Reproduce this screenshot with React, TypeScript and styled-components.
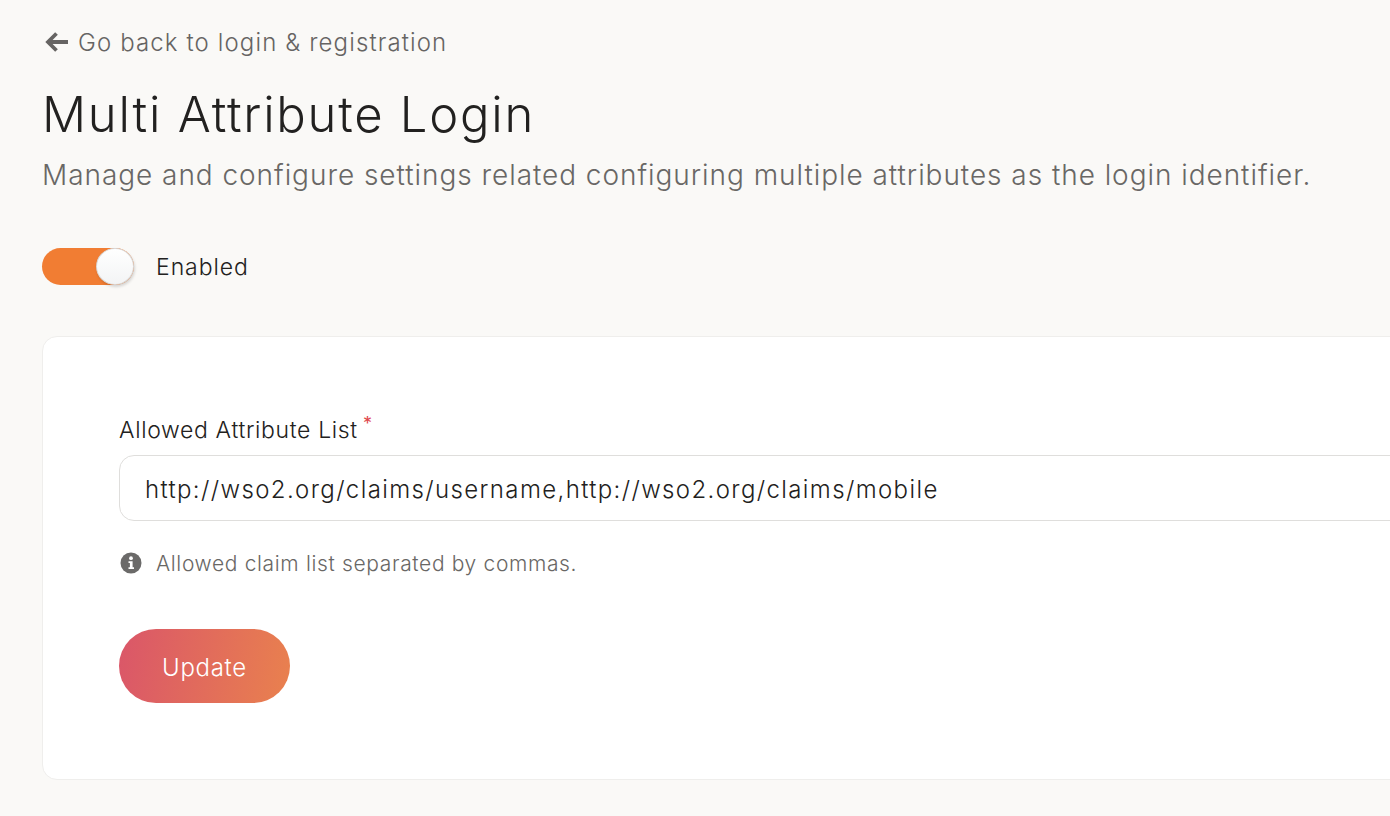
import React from "react";
import styled, { createGlobalStyle } from "styled-components";

const Global = createGlobalStyle`
  html, body { margin: 0; padding: 0; background: #faf9f7; overflow: hidden; }
  body { font-family: "Inter", "Liberation Sans", sans-serif; font-weight: 300; }
`;

const Page = styled.div`
  width: 1390px;
  height: 816px;
  overflow: hidden;
  box-sizing: border-box;
  padding: 26px 0 0 42px;
  display: flex;
  flex-direction: column;
`;

const BackLink = styled.a`
  display: flex;
  align-items: center;
  gap: 10px;
  height: 32px;
  margin-left: 3px;
  color: #666463;
  font-size: 24px;
  letter-spacing: 1.12px;
  white-space: nowrap;
`;

const Title = styled.h1`
  margin: 20px 0 0;
  font-size: 49px;
  line-height: 74px;
  font-weight: 300;
  color: #222120;
  letter-spacing: 1.75px;
  white-space: nowrap;
`;

const Subtitle = styled.p`
  margin: 0;
  font-size: 28px;
  line-height: 46px;
  color: #696765;
  letter-spacing: 0.95px;
  white-space: nowrap;
`;

const ToggleRow = styled.div`
  display: flex;
  align-items: center;
  gap: 22px;
  margin-top: 50px;
`;

const Track = styled.div`
  position: relative;
  width: 92px;
  height: 37px;
  border-radius: 19px;
  background: #f17d33;
`;

const Knob = styled.div`
  position: absolute;
  top: 0;
  right: 0;
  width: 38px;
  height: 37px;
  box-sizing: border-box;
  border-radius: 50%;
  border: 1px solid #d8d8d8;
  background: linear-gradient(#ffffff, #f3f4f5);
  box-shadow: 1px 2px 3px rgba(0, 0, 0, 0.15);
`;

const ToggleLabel = styled.span`
  font-size: 23px;
  color: #222120;
  letter-spacing: 0.95px;
`;

const Card = styled.section`
  box-sizing: border-box;
  width: 1400px;
  height: 444px;
  margin-top: 51px;
  padding: 76px 0 0 76px;
  background: #ffffff;
  border: 1px solid #efeeec;
  border-radius: 15px;
  flex-shrink: 0;
`;

const FieldLabel = styled.label`
  display: block;
  height: 42px;
  line-height: 34px;
  font-size: 23px;
  color: #222120;
  letter-spacing: 0.65px;
`;

const Required = styled.sup`
  color: #e0484c;
  font-size: 18px;
  font-weight: 400;
  line-height: 0;
  margin-left: 5px;
  vertical-align: 8px;
`;

const Input = styled.div`
  box-sizing: border-box;
  width: 1300px;
  height: 66px;
  display: flex;
  align-items: center;
  padding: 2px 0 0 25px;
  border: 1px solid #dfdedc;
  border-radius: 15px;
  font-size: 24px;
  color: #222120;
  letter-spacing: 1.38px;
  white-space: nowrap;
`;

const Hint = styled.div`
  display: flex;
  align-items: center;
  gap: 14px;
  margin-top: 26px;
  margin-left: 1px;
  height: 32px;
  font-size: 21px;
  color: #696765;
  letter-spacing: 0.65px;
`;

const UpdateButton = styled.button`
  display: block;
  margin-top: 50px;
  padding: 2px 0 0;
  width: 171px;
  height: 74px;
  border: none;
  border-radius: 37px;
  background: linear-gradient(100deg, #da5669, #e9814e);
  color: #ffffff;
  font-family: inherit;
  font-weight: 300;
  font-size: 24px;
  letter-spacing: 0.7px;
`;

export default function App() {
  return (
    <>
      <Global />
      <Page>
        <BackLink>
          <svg width="23" height="22" viewBox="0 0 23 22" aria-hidden="true">
            <path d="M11.5 2.5 L3 11 L11.5 19.5 M3.5 11 H23" fill="none" stroke="#666463" strokeWidth="3.8" />
          </svg>
          Go back to login &amp; registration
        </BackLink>
        <Title>Multi Attribute Login</Title>
        <Subtitle>Manage and configure settings related configuring multiple attributes as the login identifier.</Subtitle>
        <ToggleRow>
          <Track><Knob /></Track>
          <ToggleLabel>Enabled</ToggleLabel>
        </ToggleRow>
        <Card>
          <FieldLabel>Allowed Attribute List<Required>*</Required></FieldLabel>
          <Input>http://wso2.org/claims/username,http://wso2.org/claims/mobile</Input>
          <Hint>
            <svg width="22" height="22" viewBox="0 0 22 22" aria-hidden="true">
              <circle cx="11" cy="11" r="10.5" fill="#6b6a69" />
              <circle cx="11" cy="6.2" r="1.9" fill="#fff" />
              <path d="M8.5 9.2 H12.6 V15.2 H14 V17 H8.5 V15.2 H9.9 V11 H8.5 Z" fill="#fff" />
            </svg>
            Allowed claim list separated by commas.
          </Hint>
          <UpdateButton>Update</UpdateButton>
        </Card>
      </Page>
    </>
  );
}
